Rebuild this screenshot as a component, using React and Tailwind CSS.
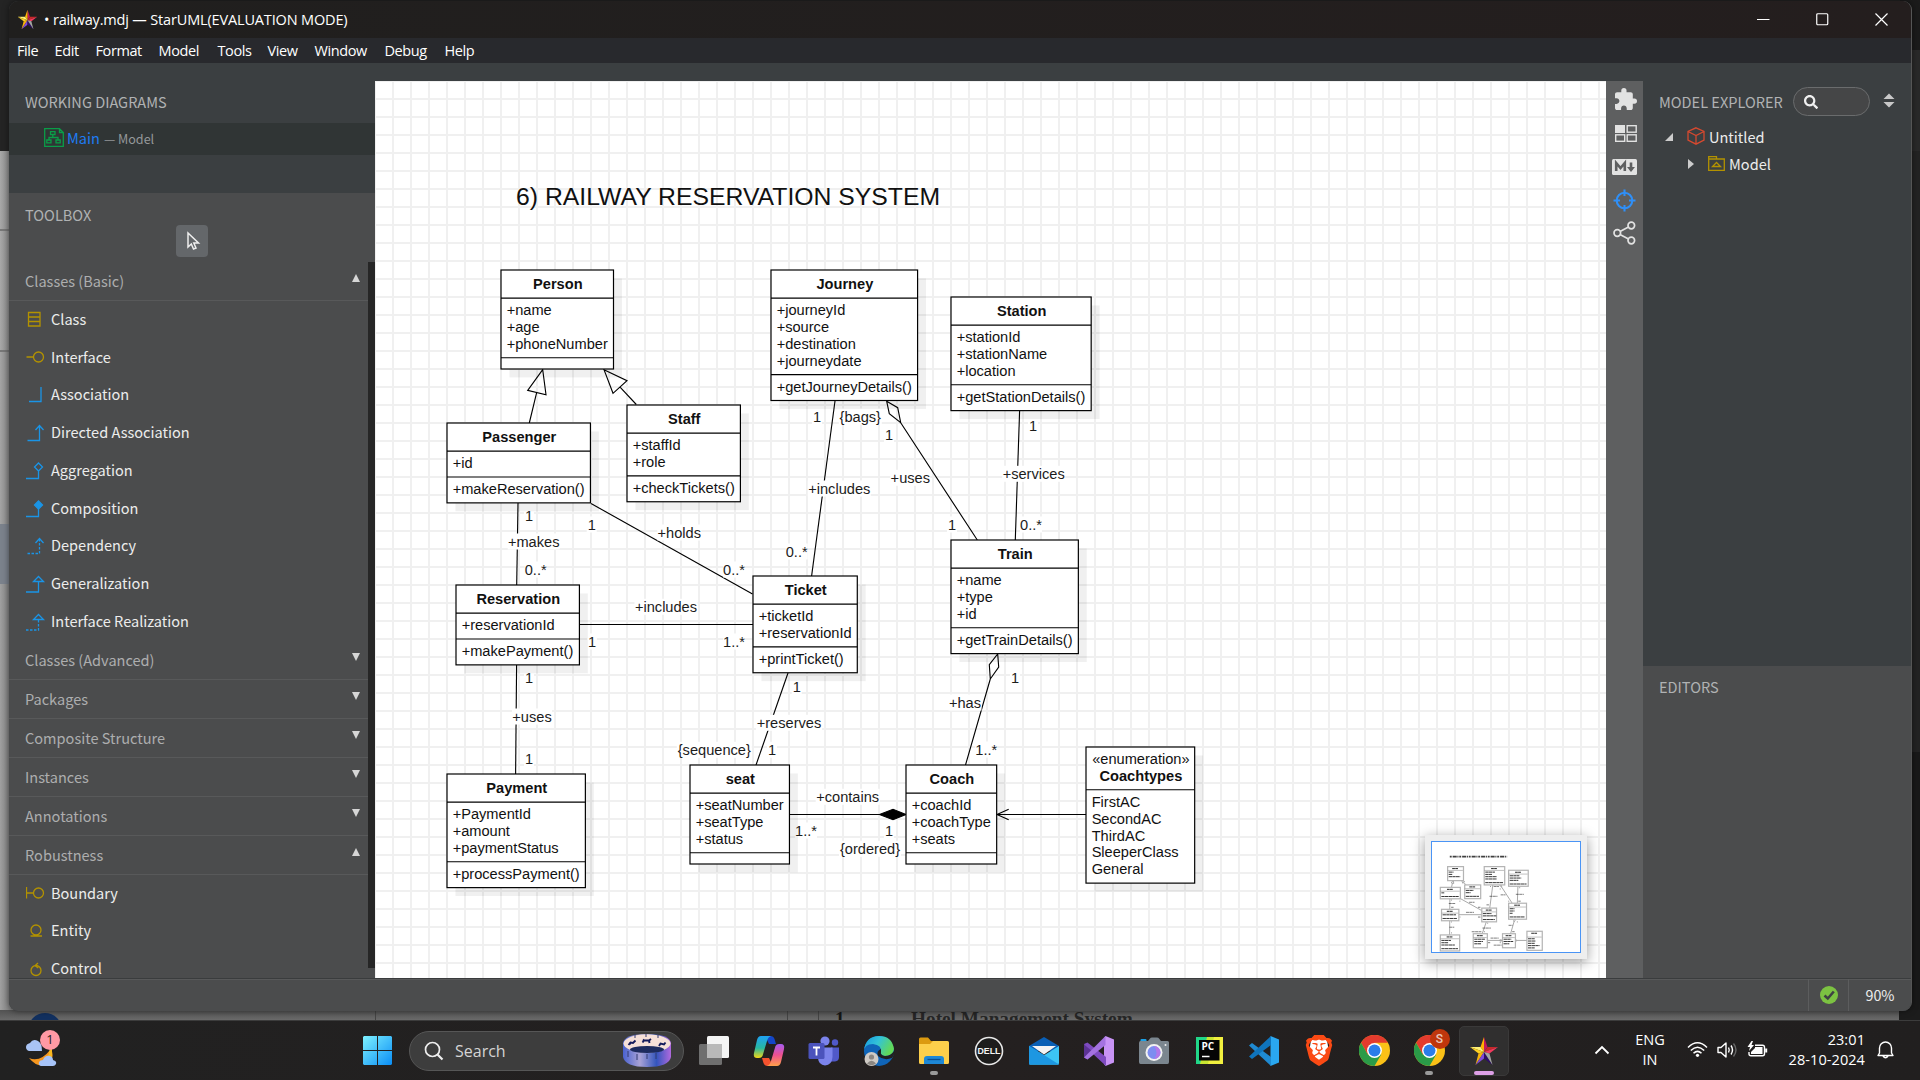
import React from "react";
import { FaSearch } from "react-icons/fa";
import { SiBrave } from "react-icons/si";

const NODES = [
  { x: 112, y: 168, w: 100, name: "Person", attrs: ["+name", "+age", "+phoneNumber"], ops: [] },
  { x: 352, y: 168, w: 130.3, name: "Journey", attrs: ["+journeyId", "+source", "+destination", "+journeydate"], ops: ["+getJourneyDetails()"] },
  { x: 512, y: 192, w: 124.6, name: "Station", attrs: ["+stationId", "+stationName", "+location"], ops: ["+getStationDetails()"] },
  { x: 224, y: 288, w: 100.8, name: "Staff", attrs: ["+staffId", "+role"], ops: ["+checkTickets()"] },
  { x: 64, y: 304, w: 127.5, name: "Passenger", attrs: ["+id"], ops: ["+makeReservation()"] },
  { x: 512, y: 408, w: 113.2, name: "Train", attrs: ["+name", "+type", "+id"], ops: ["+getTrainDetails()"] },
  { x: 336, y: 440, w: 92.7, name: "Ticket", attrs: ["+ticketId", "+reservationId"], ops: ["+printTicket()"] },
  { x: 72, y: 448, w: 109.7, name: "Reservation", attrs: ["+reservationId"], ops: ["+makePayment()"] },
  { x: 64, y: 616, w: 123, name: "Payment", attrs: ["+PaymentId", "+amount", "+paymentStatus"], ops: ["+processPayment()"] },
  { x: 280, y: 608, w: 88.4, name: "seat", attrs: ["+seatNumber", "+seatType", "+status"], ops: [] },
  { x: 472, y: 608, w: 80.6, name: "Coach", attrs: ["+coachId", "+coachType", "+seats"], ops: [] },
  { x: 632, y: 592, w: 96.6, name: "Coachtypes", stereotype: "«enumeration»", attrs: ["FirstAC", "SecondAC", "ThirdAC", "SleeperClass", "General"] },
];

const head = (n) => (n.stereotype ? 38 : 25);
const attrsH = (n) => n.attrs.length * 15 + 8;
const opsH = (n) => (n.ops ? (n.ops.length ? 23 : 10) : 0);
const height = (n) => head(n) + attrsH(n) + opsH(n);

const LABELS = [
  ["1", 529, 521.3], ["+makes", 533.7, 547], ["0..*", 535.7, 575], ["1", 591.7, 530],
  ["+holds", 679.3, 538], ["0..*", 734, 575], ["{bags}", 860.3, 422], ["1", 817, 422],
  ["1", 889, 440], ["+includes", 839.3, 494], ["0..*", 796.7, 557], ["+uses", 910.3, 483.3],
  ["1", 952, 530], ["+services", 1033.7, 479.3], ["0..*", 1031, 530], ["1", 1033, 430.7],
  ["+includes", 666, 612.3], ["1", 592, 647], ["1..*", 734, 647], ["1", 529, 683],
  ["+uses", 532, 722], ["1", 529, 764], ["1", 796.7, 692], ["+reserves", 789, 728.3],
  ["{sequence}", 714.3, 755.3], ["1", 772, 755.3], ["+contains", 847.7, 802.3],
  ["1..*", 806, 836], ["1", 889, 836], ["{ordered}", 870, 854.3], ["1", 1015, 683],
  ["+has", 965, 708], ["1..*", 986.3, 755],
];

function labelWidth(t) {
  if (t === "1") return 10;
  if (t === "0..*" || t === "1..*") return 22;
  return { "+makes": 52, "+holds": 44, "{bags}": 43, "+includes": 63, "+uses": 40, "+services": 63, "+reserves": 66, "{sequence}": 75, "+contains": 64, "{ordered}": 62, "+has": 33 }[t] || 40;
}

function Edges() {
  return (
    <g fill="none" stroke="#000">
      <path d="M536.7 392.3L529.3 423M542.7 369.7L527.7 390.3L546 394.7Z" />
      <path d="M620.3 387.3L636.3 404.5M604 369.7L627 380.7L613 393.3Z" />
      <path d="M518 503L516.7 585" />
      <path d="M591 503.5L752.5 594" />
      <path d="M835 401L811.6 576" />
      <path d="M886.7 401.3L897.7 407.7L900.7 422.7L889.3 413.7ZM900.7 422.7L977.3 540" />
      <path d="M1019.6 411L1015.3 540" />
      <path d="M579.5 624.5H753" />
      <path d="M516.6 665L515.6 774" />
      <path d="M788 673L756 765" />
      <path d="M789 814.5H880" />
      <path d="M879.5 814.5L893 809.3L906 814.5L893 819.7Z" fill="#000" />
      <path d="M997.7 654L998.7 667L990.3 679L989.3 664.7ZM990.3 679L965.5 765" />
      <path d="M997 814.5H1086M1008.7 809.3L997 814.5L1008.7 819.7" />
    </g>
  );
}

function ClassNode({ n }) {
  const h = height(n);
  const d1 = n.y + head(n);
  const d2 = d1 + attrsH(n);
  const cx = n.x + n.w / 2;
  const pitch = n.stereotype ? 14.88 : 15;
  return (
    <g>
      <rect x={n.x + 7.5} y={n.y + 7.5} width={n.w} height={h} fill="#000" opacity="0.06" />
      <rect x={n.x} y={n.y} width={n.w} height={h} fill="#fff" stroke="#000" strokeWidth="1.06" />
      <path d={`M${n.x} ${d1}h${n.w}`} stroke="#000" />
      {n.ops && <path d={`M${n.x} ${d2}h${n.w}`} stroke="#000" />}
      {n.stereotype && <text x={cx + 0.5} y={n.y + 15.4} textAnchor="middle">{n.stereotype}</text>}
      <text x={cx + 0.5} y={n.y + (n.stereotype ? 30.3 : 17.3)} textAnchor="middle" fontWeight="700">{n.name}</text>
      {n.attrs.map((a, i) => (
        <text key={a} x={n.x + 5} y={d1 + 15.4 + i * pitch}>{a}</text>
      ))}
      {(n.ops || []).map((a) => (
        <text key={a} x={n.x + 5} y={d2 + 15.5}>{a}</text>
      ))}
    </g>
  );
}

function Diagram() {
  return (
    <svg width="1231" height="897" viewBox="375 81 1231 897" className="block font-['Liberation_Sans',sans-serif]">
      <g strokeWidth="1.125"><Edges /></g>
      <g fontSize="14.625" textAnchor="middle" fill="#1c1c1c">
        {LABELS.map(([t, x, y], i) => (
          <g key={i}>
            <rect x={x - labelWidth(t) / 2} y={y - 13.5} width={labelWidth(t)} height="16" fill="#fff" />
            <text x={x} y={y}>{t}</text>
          </g>
        ))}
      </g>
      <text x="516" y="204.5" fontSize="24.75" fill="#111">6) RAILWAY RESERVATION SYSTEM</text>
      <g transform="translate(375 81) scale(1.125)" fontSize="13" fill="#111">
        {NODES.map((n) => <ClassNode key={n.name} n={n} />)}
      </g>
    </svg>
  );
}

function Minimap() {
  return (
    <div className="absolute right-[19px] bottom-[19px] h-[124px] w-[162px] bg-[#eee] p-[6px] shadow-[0_3px_12px_rgba(0,0,0,0.4)]">
      <svg width="150" height="112" viewBox="0 0 150 112" className="block bg-white">
        <g transform="scale(0.1525) translate(-3 0)">
          <g transform="scale(0.8889) translate(-375 -81)" opacity="0.35" strokeWidth="7">
            <Edges />
          </g>
          <g transform="scale(0.8889) translate(-375 -81)" fill="#222">
            {LABELS.map(([t, x, y], i) => (
              <path key={i} d={`M${x - labelWidth(t) / 2 + 2} ${y - 5}h${labelWidth(t) - 4}`} stroke="#222" strokeWidth="6" strokeDasharray="22 3" opacity="0.7" />
            ))}
            <path d="M517 197H940" stroke="#000" strokeWidth="13" strokeDasharray="14 7 30 5 8 6" opacity="0.75" />
          </g>
          {NODES.map((n) => (
            <g key={n.name}>
              <rect x={n.x} y={n.y} width={n.w + 4} height={height(n) + 4} fill="#fff" stroke="#b4b4b4" strokeWidth="8" />
              <path d={`M${n.x + n.w / 2 - 20} ${n.y + 13}h40`} stroke="#111" strokeWidth="6" strokeDasharray="18 2" />
              <path d={`M${n.x} ${n.y + head(n)}h${n.w}`} stroke="#999" strokeWidth="4" />
              {n.attrs.map((a, i) => (
                <path key={a} d={`M${n.x + 7} ${n.y + head(n) + 11 + i * 15}h${a.length * 6.3}`} stroke="#111" strokeWidth="5.5" strokeDasharray="22 2" />
              ))}
              {(n.ops || []).map((a) => (
                <path key={a} d={`M${n.x + 7} ${n.y + height(n) - 11}h${n.w - 14}`} stroke="#111" strokeWidth="5.5" strokeDasharray="22 2" />
              ))}
            </g>
          ))}
        </g>
        <rect x="0.5" y="0.5" width="149" height="111" fill="none" stroke="#4a94f5" />
      </svg>
    </div>
  );
}

function StarLogo({ className }) {
  return (
    <svg viewBox="0 0 30 30" className={className}>
      <path d="M15 1L18.5 11L15 16Z" fill="#c2185b" />
      <path d="M15 1L11.5 11L15 16Z" fill="#ffb300" />
      <path d="M1 11H11.5L15 16Z" fill="#fff176" />
      <path d="M1 11L9.5 17.5L15 16Z" fill="#fdd022" />
      <path d="M29 11H18.5L15 16Z" fill="#c62828" />
      <path d="M29 11L20.5 17.5L15 16Z" fill="#f23a5e" />
      <path d="M9.5 17.5L6.5 29L15 16Z" fill="#f5b30c" />
      <path d="M6.5 29L15 22.5V16Z" fill="#7e49d8" />
      <path d="M15 16V22.5L23.5 29Z" fill="#2c0d66" />
      <path d="M20.5 17.5L23.5 29L15 16Z" fill="#a3a3a3" />
    </svg>
  );
}

const MENU = [
  ["File", "w-[37.5px]"], ["Edit", "w-[41px]"], ["Format", "w-[63px]"], ["Model", "w-[59px]"],
  ["Tools", "w-[50px]"], ["View", "w-[47px]"], ["Window", "w-[70px]"], ["Debug", "w-[60px]"], ["Help", "w-[40px]"],
];

function TitleBar() {
  return (
    <div className="flex h-[37px] shrink-0 items-center bg-gradient-to-r from-[#201f1e] to-[#241e1e] pl-[8px]">
      <StarLogo className="h-[21px] w-[21px]" />
      <span className="ml-[6px] font-['Open_Sans',sans-serif] text-[14.5px] tracking-[-0.16px] whitespace-nowrap text-white">• railway.mdj — StarUML(EVALUATION MODE)</span>
      <div className="ml-auto flex items-center gap-[46px] pr-[23px]">
        <svg width="13" height="13" viewBox="0 0 13 13"><path d="M0 6.5H12.5" stroke="#fff" strokeWidth="1.2" /></svg>
        <svg width="13" height="13" viewBox="0 0 13 13" fill="none"><rect x="0.75" y="0.75" width="11" height="11" rx="1" stroke="#fff" strokeWidth="1.2" /></svg>
        <svg width="13" height="13" viewBox="0 0 13 13"><path d="M0.5 0.5L12.5 12.5M12.5 0.5L0.5 12.5" stroke="#fff" strokeWidth="1.2" /></svg>
      </div>
    </div>
  );
}

function MenuBar() {
  return (
    <div className="flex h-[25px] shrink-0 items-center bg-[#28292d] pl-[8px] font-['Open_Sans',sans-serif] text-[14.5px] tracking-[-0.4px] text-white">
      {MENU.map(([m, w]) => <span key={m} className={w}>{m}</span>)}
    </div>
  );
}

const BLUE = "#1a94e6";
const GOLD = "#b39200";

const TOOLS = [
  ["Class", GOLD, <path d="M2.5 2.5H14V16H2.5ZM2.5 7H14M2.5 11.5H14" />],
  ["Interface", GOLD, <path d="M0.5 9H7M7.5 9a5 5 0 1 0 10 0a5 5 0 1 0 -10 0" />],
  ["Association", BLUE, <path d="M3 16.5H15V2" />],
  ["Directed Association", BLUE, <path d="M1.5 17.5H13.5V2.5M9.5 7L13.5 2.5L17.5 7" />],
  ["Aggregation", BLUE, <path d="M0 17.5H12.5V10L16.5 6L12.5 2L8.5 6L12.5 10" />],
  ["Composition", BLUE, <g><path d="M0 17.5H12.5V10" /><path d="M12.5 10L16.5 6L12.5 2L8.5 6Z" fill={BLUE} /></g>],
  ["Dependency", BLUE, <g><path d="M1.5 17.5H13.5V3" strokeDasharray="2.5 1.5" /><path d="M9.5 7L13.5 2.5L17.5 7" /></g>],
  ["Generalization", BLUE, <path d="M0 18H12.5V7.5M7.5 7.5H17.5L12.5 2.5Z" />],
  ["Interface Realization", BLUE, <g><path d="M0 18H12.5V8" strokeDasharray="2.5 1.5" /><path d="M7.5 7.5H17.5L12.5 2.5Z" /></g>],
];

const ROBUST = [
  ["Boundary", GOLD, <path d="M0.5 3V14.5M0.5 9H7.5M7.5 9a5 5 0 1 0 10 0a5 5 0 1 0 -10 0" />],
  ["Entity", GOLD, <path d="M5 9a5 5 0 1 0 10 0a5 5 0 1 0 -10 0M4.5 15H16" />],
  ["Control", GOLD, <path d="M5 11.5a5 5 0 1 0 10 0a5 5 0 1 0 -10 0M12 4L9 6.7L12.3 9" />],
];

function ToolItem({ item: [name, color, art] }) {
  return (
    <div className="flex h-[37.75px] shrink-0 items-center pl-[17px]">
      <svg width="20" height="20" viewBox="0 0 20 20" fill="none" stroke={color} strokeWidth="1.3">{art}</svg>
      <span className="mb-[2px] ml-[5px] text-[14.55px] leading-[20px] text-[#ececec]">{name}</span>
    </div>
  );
}

function ToolHeader({ name, open }) {
  return (
    <div className="flex h-[39px] shrink-0 items-center justify-between border-b border-[#58595a] pr-[7px] pl-[16px]">
      <span className="text-[14.55px] leading-[20px] text-[#adaeaf]">{name}</span>
      <svg width="10" height="8" viewBox="0 0 10 8" className="mb-[6px]">
        <path d={open ? "M1 8H9L5 0Z" : "M1 0H9L5 8Z"} fill="#d6d6d6" />
      </svg>
    </div>
  );
}

function LeftSidebar() {
  return (
    <div className="flex w-[366px] shrink-0 flex-col">
      <div className="flex h-[130px] shrink-0 flex-col bg-[#3b3f41]">
        <div className="flex h-[60px] items-center pt-[18px] pl-[16px] text-[14.55px] leading-[20px] text-[#b0b2b3]">WORKING DIAGRAMS</div>
        <div className="flex h-[32px] items-center bg-[#303535] pl-[35px]">
          <svg width="20" height="19" viewBox="0 0 20 19" fill="none" stroke="#0a9d48" strokeWidth="1.3" className="mb-[3px]">
            <path d="M15.5 0.7H0.7V18.3H19.3V4.5L15.5 0.7V4.5H19.3M6.5 3.7H11V6.5H6.5ZM2.8 12H7V14.8H2.8ZM12 12H16.2V14.8H12ZM8.8 6.5V9.5M5 12V9.5H14V12" />
          </svg>
          <span className="mb-[2px] ml-[3px] text-[14.55px] leading-[20px] text-[#1e7bf2]">Main</span>
          <span className="mb-[1px] ml-[4px] text-[12.6px] leading-[20px] text-[#95989a]">— Model</span>
        </div>
      </div>
      <div className="flex min-h-0 flex-1 flex-col bg-[#4b4c4d]">
        <div className="flex h-[69px] shrink-0 flex-col pt-[11px]">
          <span className="pl-[16px] text-[14.55px] leading-[22px] text-[#b0b2b3]">TOOLBOX</span>
          <div className="-mt-px ml-[167px] flex h-[32px] w-[32px] shrink-0 items-center justify-center rounded-[4px] bg-[#64676a]">
            <svg width="15" height="20" viewBox="0 0 15 20" fill="none" stroke="#eee" strokeWidth="1.5" className="ml-[3px]">
              <path d="M2 2V16L5.3 13L7.5 18L10 17L7.8 12H12.5Z" />
            </svg>
          </div>
        </div>
        <div className="flex min-h-0 flex-1 overflow-hidden">
          <div className="flex w-[359px] flex-col overflow-hidden">
            <ToolHeader name="Classes (Basic)" open />
            {TOOLS.map((t) => <ToolItem key={t[0]} item={t} />)}
            {["Classes (Advanced)", "Packages", "Composite Structure", "Instances", "Annotations"].map((h) => <ToolHeader key={h} name={h} />)}
            <ToolHeader name="Robustness" open />
            {ROBUST.map((t) => <ToolItem key={t[0]} item={t} />)}
          </div>
          <div className="h-[706px] w-[7px] bg-[#262626]" />
        </div>
      </div>
    </div>
  );
}

function SideTools() {
  return (
    <div className="flex w-[37px] shrink-0 flex-col items-center bg-[#5e5f60] text-[#e2e2e2]">
      <svg width="22" height="22" viewBox="2 1 21 21" className="mt-[7px] ml-[2px]" fill="#e2e2e2">
        <path d="M20.5 11H19V7c0-1.1-.9-2-2-2h-4V3.5a2.5 2.5 0 0 0-5 0V5H4c-1.1 0-1.99.9-1.99 2v3.8H3.5c1.49 0 2.7 1.21 2.7 2.7s-1.21 2.7-2.7 2.7H2V20c0 1.1.9 2 2 2h3.8v-1.5c0-1.49 1.21-2.7 2.7-2.7 1.49 0 2.7 1.21 2.7 2.7V22H17c1.1 0 2-.9 2-2v-4h1.5a2.5 2.5 0 0 0 0-5z" />
      </svg>
      <svg width="22" height="17" viewBox="0 0 22 17" className="mt-[15px] ml-[2px]" fill="none" stroke="#e2e2e2" strokeWidth="1.4">
        <rect x="0" y="0" width="10" height="8" fill="#e2e2e2" stroke="none" />
        <rect x="12.2" y="0.7" width="9" height="6.5" /><rect x="0.7" y="9.8" width="9" height="6.5" /><rect x="12.2" y="9.8" width="9" height="6.5" />
      </svg>
      <svg width="25" height="16" viewBox="0 0 25 16" className="mt-[17px]">
        <rect width="25" height="16" rx="1.5" fill="#e2e2e2" />
        <path d="M4.2 12V4L8.5 9L12.8 4V12M19 3.5V11" fill="none" stroke="#5e5f60" strokeWidth="2.6" />
        <path d="M15 8H23L19 13Z" fill="#5e5f60" />
      </svg>
      <svg width="23" height="23" viewBox="0 0 23 23" className="mt-[14px]" fill="none" stroke="#2f8ff7" strokeWidth="2.1">
        <circle cx="11.5" cy="11.5" r="7.8" /><path d="M11.5 0.5V7M11.5 16V22.5M0.5 11.5H7M16 11.5H22.5" />
      </svg>
      <svg width="23" height="24" viewBox="0 0 23 24" className="mt-[9px]" fill="none" stroke="#e2e2e2" strokeWidth="1.7">
        <circle cx="4.3" cy="12" r="3.3" /><circle cx="18.3" cy="4.5" r="3.3" /><circle cx="18.3" cy="19.5" r="3.3" /><path d="M7 10.5L15.5 6M7 13.5L15.5 18" />
      </svg>
    </div>
  );
}

function RightSidebar() {
  return (
    <div className="flex flex-1 flex-col">
      <div className="flex h-[585px] shrink-0 flex-col bg-[#3b3f41]">
        <div className="mt-[6px] flex h-[29px] items-center pr-[16px] pl-[16px]">
          <span className="w-[125px] text-[14.55px] leading-[20px] whitespace-nowrap text-[#b0b2b3]">MODEL EXPLORER</span>
          <div className="ml-[9px] flex h-[29px] w-[77px] shrink-0 items-center rounded-full border border-[#6a6c6d] bg-[#454647] pl-[10px] text-[#f0f0f0]">
            <FaSearch className="h-[14px] w-[14px]" />
          </div>
          <svg width="12" height="15" viewBox="0 0 12 15" className="mt-[-3px] ml-auto"><path d="M0.5 6H11.5L6 0.5ZM0.5 9H11.5L6 14.5Z" fill="#c8c8c8" /></svg>
        </div>
        <div className="mt-[7px] flex h-[27px] items-center pl-[22px] text-[14.55px] leading-[20px] text-[#ececec]">
          <svg width="8" height="8" viewBox="0 0 8 8"><path d="M8 0V8H0Z" fill="#ccc" /></svg>
          <svg width="18" height="18" viewBox="0 0 18 18" className="mt-[-2px] ml-[14px]" fill="none" stroke="#d6492f" strokeWidth="1.3"><path d="M9 0.8L17 4.5V13L9 17.2L1 13V4.5ZM1 4.5L9 8.5L17 4.5M9 8.5V17" /></svg>
          <span className="ml-[4px]">Untitled</span>
        </div>
        <div className="flex h-[27px] items-center pl-[45px] text-[14.55px] leading-[20px] text-[#ececec]">
          <svg width="6" height="10" viewBox="0 0 6 10"><path d="M0 0L6 5L0 10Z" fill="#ccc" /></svg>
          <svg width="17" height="15" viewBox="0 0 17 15" className="mt-[-1px] ml-[14px]" fill="none" stroke={GOLD} strokeWidth="1.3"><path d="M0.7 0.7H8.5V3H16.3V14.3H0.7ZM0.7 3H8.5M4.5 10.5H12.5L8.5 6.5Z" /></svg>
          <span className="ml-[4px]">Model</span>
        </div>
      </div>
      <div className="flex-1 bg-[#4b4c4d] pt-[10px] pl-[16px] text-[14.55px] leading-[22px] text-[#b0b2b3]">EDITORS</div>
    </div>
  );
}

function StatusBar() {
  return (
    <div className="flex h-[33px] shrink-0 items-stretch border-t border-[#3a3c3d] bg-[#4b4c4d] shadow-[inset_0_1px_0_#58595a]">
      <div className="ml-auto flex w-[41px] items-center justify-center border-x border-[#5c5d5e]">
        <svg width="18" height="18" viewBox="0 0 18 18"><circle cx="9" cy="9" r="9" fill="#7cc242" /><path d="M4.5 9.5L7.8 12.5L13.8 5.5" fill="none" stroke="#3e4143" strokeWidth="2.6" /></svg>
      </div>
      <div className="flex w-[62px] items-center justify-center pb-px text-[14.3px] leading-[20px] text-[#ececec]">90%</div>
    </div>
  );
}

function Backdrop() {
  return (
    <div className="absolute inset-0 flex flex-col">
      <div className="flex flex-1">
        <div className="flex w-[20px] flex-col">
          <div className="h-[151px] bg-[#242424]" />
          <div className="h-[80px] border-b-2 border-[#777] bg-gradient-to-r from-[#a8a8a8] via-[#8a8a8a] to-[#707070]" />
          <div className="h-[121px] border-b-2 border-[#777] bg-gradient-to-r from-[#a8a8a8] via-[#8a8a8a] to-[#707070]" />
          <div className="h-[172px] bg-gradient-to-r from-[#a4a4a4] via-[#858585] to-[#6c6c6c]" />
          <div className="h-[60px] bg-[#7b828c]" />
          <div className="flex-1 bg-gradient-to-r from-[#a0a0a0] via-[#808080] to-[#666]" />
        </div>
        <div className="ml-auto flex w-[20px] flex-col">
          <div className="h-[50px] bg-[#1b1b1b]" />
          <div className="h-[101px] bg-[#292929]" />
          <div className="h-[601px] bg-[#232323]" />
          <div className="flex-1 bg-[#191919]" />
        </div>
      </div>
      <div className="flex h-[10px] items-start overflow-hidden bg-gradient-to-b from-[#525252] to-[#6a6a6a]">
        <div className="mt-[3px] ml-[28px] h-[34px] w-[34px] shrink-0 rounded-full bg-[#12305f]" />
        <div className="ml-[313px] h-[10px] w-px bg-[#444]" />
        <div className="ml-[411px] h-[10px] w-px bg-[#444]" />
        <div className="ml-[30px] h-[10px] w-px bg-[#444]" />
        <span className="mt-[-1px] ml-[16px] w-[76px] shrink-0 font-['Liberation_Serif',serif] text-[19.3px] leading-[20px] font-bold text-[#161616]">1.</span>
        <span className="mt-[-1px] shrink-0 font-['Liberation_Serif',serif] text-[19.3px] leading-[20px] font-bold whitespace-nowrap text-[#262626]">Hotel Management System</span>
        <div className="ml-auto h-[10px] w-[21px] bg-[#1c1c1c]" />
      </div>
    </div>
  );
}

function Chrome() {
  return (
    <svg width="31" height="31" viewBox="0 0 30 30">
      <circle cx="15" cy="15" r="15" fill="#fbc117" />
      <path d="M2 7.5A15 15 0 0 1 28 7.5H15L8.5 18.8Z" fill="#e33b2e" />
      <path d="M2 7.5A15 15 0 0 0 15 30L21.5 18.8L8.5 18.8Z" fill="#2a9b48" />
      <circle cx="15" cy="15" r="7.2" fill="#fff" />
      <circle cx="15" cy="15" r="5.8" fill="#2b7de9" />
    </svg>
  );
}

const APPS = [
  ["task-view", <svg width="32" height="32" viewBox="0 0 32 32"><rect x="1" y="9" width="23" height="21" rx="1.5" fill="#6f6f6f" /><rect x="9" y="1" width="22" height="22" rx="1.5" fill="#f4f4f4" /><rect x="9" y="9" width="15" height="14" fill="#b9b9b9" /></svg>],
  ["copilot", <svg width="32" height="30" viewBox="0 0 32 30">
    <defs>
      <linearGradient id="cpA" x1="0" y1="0" x2="0" y2="1"><stop offset="0" stopColor="#1fa2f5" /><stop offset="0.55" stopColor="#28b8a0" /><stop offset="1" stopColor="#f4d713" /></linearGradient>
      <linearGradient id="cpB" x1="0" y1="0" x2="0" y2="1"><stop offset="0" stopColor="#a65cf0" /><stop offset="0.5" stopColor="#ee5090" /><stop offset="1" stopColor="#ffa14a" /></linearGradient>
    </defs>
    <path d="M16 8L20 8H23L21.500 3Q20.500 0 17.500 0H12Z" fill="#1446c8" />
    <path d="M16 22H9L10.500 27Q11.500 30 14.500 30H20Z" fill="#f5522e" />
    <path d="M8 0H18Q15 1 14 5L9.500 20Q8.500 22 6 22H4Q0 22 1 17L4 4Q5 0 8 0Z" fill="url(#cpA)" />
    <path d="M24 30H14Q17 29 18 25L22.500 10Q23.500 8 26 8H28Q32 8 31 13L28 26Q27 30 24 30Z" fill="url(#cpB)" />
  </svg>],
  ["teams", <svg width="32" height="30" viewBox="0 0 32 30"><circle cx="17" cy="5" r="4.6" fill="#7b83eb" /><circle cx="27" cy="6.500" r="3.200" fill="#5059c9" /><path d="M23 11.500H31V21Q31 25 27 25.500H23Z" fill="#5059c9" /><path d="M10 11.500H24.500V21Q24 29 17 29.500Q10.500 29 10 22Z" fill="#7b83eb" /><rect x="0.500" y="7" width="16" height="16" rx="1.500" fill="#4b53bc" /><path d="M5 11.500H12M8.500 11.500V19.500" stroke="#fff" strokeWidth="1.800" /></svg>],
  ["edge", <svg width="32" height="32" viewBox="0 0 32 32">
    <defs><linearGradient id="edA" x1="0" y1="0" x2="1" y2="0.4"><stop offset="0" stopColor="#1597e0" /><stop offset="0.5" stopColor="#33c3d8" /><stop offset="1" stopColor="#62d957" /></linearGradient></defs>
    <circle cx="16" cy="16" r="15" fill="#0f64b8" />
    <path d="M1 17Q1 9 10 9Q19 10 18 17Q17 20 22 21Q30 21 31 14Q29 1 16 1Q3 1 1 15Z" fill="url(#edA)" />
    <path d="M18 17Q17 20 22 21Q28 21 31 16Q32 19 29 23Q21 26 15 21Q13 16 18 14Z" fill="#202020" />
    <circle cx="8.500" cy="24" r="7" fill="#cfcac5" /><circle cx="8.500" cy="22" r="2.600" fill="#8a8682" /><path d="M4 28.500Q8.500 23 13 28.500Q8.500 32 4 28.500Z" fill="#8a8682" />
  </svg>],
  ["files", <svg width="32" height="28" viewBox="0 0 32 28"><path d="M1 2Q1 0.500 2.500 0.500H10L13 4H27V10H1Z" fill="#dc9a10" /><path d="M1 7H12L15 4H29.500Q31 4 31 5.500V25.500Q31 27 29.500 27H2.500Q1 27 1 25.500Z" fill="#fdcf4b" /><path d="M6 27V22Q6 19 9 19H23Q26 19 26 22V27Z" fill="#1e88d6" /><path d="M9.500 22.500H22.500" stroke="#0b4f91" strokeWidth="1.300" /></svg>, "dot"],
  ["dell", <svg width="30" height="30" viewBox="0 0 30 30"><circle cx="15" cy="15" r="13.500" fill="#1c1c1c" stroke="#e8e8e8" strokeWidth="1.600" /><text x="15" y="18.300" textAnchor="middle" fontFamily="Liberation Sans" fontWeight="700" fontSize="8.800" fill="#f4f4f4">DELL</text></svg>],
  ["mail", <svg width="32" height="30" viewBox="0 0 32 30"><path d="M1 10L16 1L31 10V15H1Z" fill="#0a5fb5" /><path d="M1 10L31 28.500H2.500Q1 28.500 1 27Z" fill="#1d97e2" /><path d="M31 10L1 28.500H29.500Q31 28.500 31 27Z" fill="#3cc4f5" /><path d="M1 10L16 19L31 28.500H2Q1 28.500 1 27Z" fill="#1d97e2" /><path d="M4 10H28L16 18.500Z" fill="#f3f3f3" /></svg>],
  ["visual-studio", <svg width="32" height="30" viewBox="0 0 32 30"><path d="M22.500 0L31 3.500V26.500L22.500 30L21 28V2Z" fill="#c893f5" /><path d="M1 8L4.500 6.500L23 21V30L1.500 10Z" fill="#7e4bc0" /><path d="M1 8.500V21.500L4.500 23.500L9 15Z" fill="#5c3295" /><path d="M1 21.500L22.500 0V9L4.500 23.500Z" fill="#a472e0" /></svg>],
  ["camera", <svg width="32" height="28" viewBox="0 0 32 28"><rect x="2.500" y="2" width="6" height="5" rx="1" fill="#1da1e6" /><path d="M10 4L12 1.500Q12.500 0.500 14 0.500H19Q20.500 0.500 21 1.500L23 4H29.500Q31 4 31 5.500V25Q31 27 29.500 27H2.500Q1 27 1 25V6Q1 4 2.500 4Z" fill="#7b868f" /><circle cx="16" cy="15.500" r="8.500" fill="#f2f2f2" /><circle cx="16" cy="15.500" r="6.500" fill="#7d8df0" /><path d="M16 9A6.500 6.500 0 0 1 16 22Q21 15.500 16 9Z" fill="#b278e8" /><circle cx="27.500" cy="8" r="1" fill="#eee" /></svg>],
  ["pycharm", <svg width="27" height="27" viewBox="0 0 27 27"><rect width="27" height="27" fill="#c9e531" /><path d="M0 0H11L4 27H0Z" fill="#21d789" /><path d="M18 0H27V27H12Z" fill="#f2f03f" /><rect x="3" y="3" width="20.500" height="20.500" fill="#050505" /><text x="5.500" y="13" fontFamily="Open Sans" fontWeight="700" fontSize="10" fill="#fff">PC</text><path d="M6 19.500H13.500" stroke="#fff" strokeWidth="1.500" /></svg>],
  ["vscode", <svg width="32" height="30" viewBox="0 0 32 30"><path d="M22.500 0L31 3.500V26.500L22.500 30Z" fill="#2aa7f0" /><path d="M1 9.500L4 7L23 21V30Z" fill="#1f8ad2" /><path d="M1 20.500L4 23L23 9V0Z" fill="#0f74bd" /></svg>],
  ["brave", <svg width="28" height="31" viewBox="0 0 28 31"><path d="M6 5L14 3L22 5L24 18L14 28L4 18Z" fill="#fff" /><SiBrave x="-1.500" y="0" size="31" color="#fb4a14" /></svg>],
  ["chrome", <Chrome />],
  ["chrome-profile", <div className="relative"><Chrome /><span className="absolute top-[-6px] left-[16px] flex h-[20px] w-[20px] items-center justify-center rounded-full bg-[#bf360c] font-['Roboto',sans-serif] text-[12px] font-medium text-[#e8c8bc]">S</span></div>, "dot"],
  ["staruml", <StarLogo className="h-[30px] w-[30px]" />, "active"],
];

function Taskbar() {
  return (
    <div className="flex h-[60px] items-center border-t border-[#3c3c3c] bg-gradient-to-r from-[#212121] via-[#242020] to-[#211f1f]">
      <div className="relative ml-[25px] h-[36px] w-[36px] shrink-0">
        <svg width="36" height="36" viewBox="0 0 36 36">
          <path d="M4 25Q15 30 26 16Q30 24 24 30Q14 37 4 25Z" fill="#f5961e" />
          <path d="M27 15V24L20 27Q25 22 24 18Z" fill="#f8b81f" />
          <path d="M4 18Q1 17 1 14Q1 11 5 10Q8 5 13 8Q17 10 17 18Z" fill="#a9c4f5" />
          <path d="M16 33Q13 32 14 29Q15 27 18 27Q20 22 25 23Q28 24 28 27Q32 28 31 31Q30 33 28 33Z" fill="#a6c3f7" />
        </svg>
        <span className="absolute top-[-3px] left-[15px] flex h-[20px] w-[20px] items-center justify-center rounded-full bg-[#ff99a4] font-['Open_Sans',sans-serif] text-[13px] text-[#222]">1</span>
      </div>
      <svg width="29" height="29" viewBox="0 0 29 29" className="ml-[302px] shrink-0">
        <defs><linearGradient id="win" x1="0" y1="0" x2="1" y2="1"><stop offset="0" stopColor="#7ef2ff" /><stop offset="1" stopColor="#0a8df5" /></linearGradient></defs>
        <path d="M1 0H14V14H0V1ZM15 0H28L29 1V14H15ZM0 15H14V29H1L0 28ZM15 15H29V28L28 29H15Z" fill="url(#win)" />
      </svg>
      <div className="ml-[17px] flex h-[40px] w-[275px] shrink-0 items-center rounded-full border border-[#565656] bg-[#3d3d3d] pr-[12px] pl-[14px]">
        <svg width="20" height="20" viewBox="0 0 20 20" fill="none" stroke="#eee" strokeWidth="1.700"><circle cx="8.500" cy="8.500" r="7" /><path d="M13.500 13.500L18.500 18.500" strokeWidth="2.200" /></svg>
        <span className="ml-[11px] font-['Open_Sans',sans-serif] text-[16px] tracking-[0px] text-[#d4d4d4]">Search</span>
        <svg width="48" height="33" viewBox="0 0 48 33" className="ml-auto">
          <defs><linearGradient id="zoe" x1="0" y1="0" x2="1" y2="0"><stop offset="0" stopColor="#4a62cf" /><stop offset="0.35" stopColor="#a9a3d6" /><stop offset="0.7" stopColor="#3355bd" /><stop offset="1" stopColor="#b06ade" /></linearGradient></defs>
          <path d="M0 10Q0 0 24 0Q48 0 48 10V23Q46 33 24 33Q2 33 0 23Z" fill="url(#zoe)" />
          <ellipse cx="24" cy="9.500" rx="23.500" ry="9.200" fill="#f6e0d8" />
          <ellipse cx="24" cy="15.500" rx="17" ry="3.500" fill="#1d2b5e" />
          <path d="M5.500 11L7.500 8.500L10 9L12.500 6.500M7.500 8.500L6.500 10.500M19.500 8.500L21 6.500H26L28 5M21 6.500L20 5.500M26 6.500L26.500 9M36 12L37.500 9.500L41 10.500L42.500 8.500" stroke="#151b5c" strokeWidth="1.900" fill="none" />
          <path d="M12 0V4M23 0V3M35 1V4M5 17V23M14 20V26M24 20V25M33 19V25" stroke="#333a70" strokeWidth="1" />
        </svg>
      </div>
      <div className="ml-[2.500px] flex shrink-0">
        {APPS.map(([id, art, state]) => (
          <div key={id} className="flex w-[55px] justify-center">
            <div className={state === "active" ? "relative flex h-[50px] w-[50px] items-center justify-center rounded-[5px] border border-[#3a3939] bg-[#302f2f]" : "relative flex h-[50px] w-[50px] items-center justify-center"}>
              {art}
              {state === "dot" && <span className="absolute bottom-px h-[4px] w-[8px] rounded-full bg-[#9a9a9a]" />}
              {state === "active" && <span className="absolute bottom-0 h-[4px] w-[20px] rounded-full bg-[#dd9fe6]" />}
            </div>
          </div>
        ))}
      </div>
      <div className="ml-auto flex shrink-0 items-center pr-[26px] pb-[2px] font-['Open_Sans',sans-serif] text-white">
        <svg width="16" height="10" viewBox="0 0 16 10" fill="none" stroke="#fff" strokeWidth="1.800"><path d="M1.500 8.500L8 2L14.500 8.500" /></svg>
        <div className="ml-[20px] w-[40px] text-center text-[14.500px] leading-[20px] tracking-[0px]">ENG<br />IN</div>
        <svg width="21" height="17" viewBox="0 0 21 17" className="ml-[17px]" fill="none" stroke="#fff" strokeWidth="1.500"><path d="M1 6.500Q10.500 -3 20 6.500M3.800 9.500Q10.500 3 17.200 9.500M6.500 12.300Q10.500 8.500 14.500 12.300" /><circle cx="10.500" cy="14.300" r="1.600" fill="#fff" stroke="none" /></svg>
        <svg width="21" height="18" viewBox="0 0 21 18" className="ml-[9px]" fill="none" stroke="#fff" strokeWidth="1.400"><path d="M1 6.500H4L9 2V16L4 11.500H1Z" strokeLinejoin="round" /><path d="M11.500 6.500Q13 9 11.500 11.500M14 4.500Q17 9 14 13.500" /><path d="M16.500 2.500Q21.500 9 16.500 15.500" stroke="#666" /></svg>
        <svg width="21" height="18" viewBox="0 0 21 18" className="ml-[9px]" fill="none" stroke="#fff" strokeWidth="1.400"><path d="M8 4.200H15.500Q17.500 4.200 17.500 6.200V12.800Q17.500 14.800 15.500 14.800H4Q2 14.800 2 12.800V11" /><path d="M8 6H15.500V13H4V11L8 7Z" fill="#fff" stroke="none" /><path d="M19.200 7.500V11.500" strokeWidth="2" /><path d="M4.500 0L0.500 6H3L2 10L7 4H4.500L6 0Z" fill="#fff" stroke="none" /></svg>
        <div className="ml-[10px] w-[87px] text-right text-[14.500px] leading-[20px] tracking-[0.080px] whitespace-nowrap">23:01<br />28-10-2024</div>
        <svg width="17" height="19" viewBox="0 0 17 19" className="ml-[12px]" fill="none" stroke="#fff" strokeWidth="1.400"><path d="M2.500 13V8A6 6 0 0 1 14.500 8V13L16 15.500H1ZM6 16Q8.500 19.500 11 16" strokeLinejoin="round" /></svg>
      </div>
    </div>
  );
}

export default function App() {
  return (
    <div className="flex h-[1080px] w-[1920px] flex-col overflow-hidden bg-[#222]">
      <div className="relative h-[1020px] shrink-0 overflow-hidden">
        <Backdrop />
        <div className="relative mt-px ml-[9px] flex h-[1010px] w-[1903px] flex-col overflow-hidden rounded-[9px] border-r border-[#555] bg-[#3b3f41] font-['Noto_Sans_CJK_SC',sans-serif] shadow-[0_0_6px_rgba(0,0,0,0.5)]">
          <TitleBar />
          <MenuBar />
          <div className="flex min-h-0 flex-1">
            <LeftSidebar />
            <div className="flex min-w-0 flex-1 flex-col">
              <div className="h-[18px] shrink-0" />
              <div className="flex min-h-0 flex-1">
                <div className="relative w-[1231px] shrink-0 overflow-hidden bg-white bg-[linear-gradient(to_right,transparent_17px,#f0f0f0_17px),linear-gradient(to_bottom,transparent_17px,#f0f0f0_17px),linear-gradient(to_right,#f0f0f0_1px,transparent_1px),linear-gradient(to_bottom,#f0f0f0_1px,transparent_1px)] bg-[size:18px_18px]">
                  <Diagram />
                  <Minimap />
                </div>
                <SideTools />
                <RightSidebar />
              </div>
            </div>
          </div>
          <StatusBar />
        </div>
      </div>
      <Taskbar />
    </div>
  );
}
